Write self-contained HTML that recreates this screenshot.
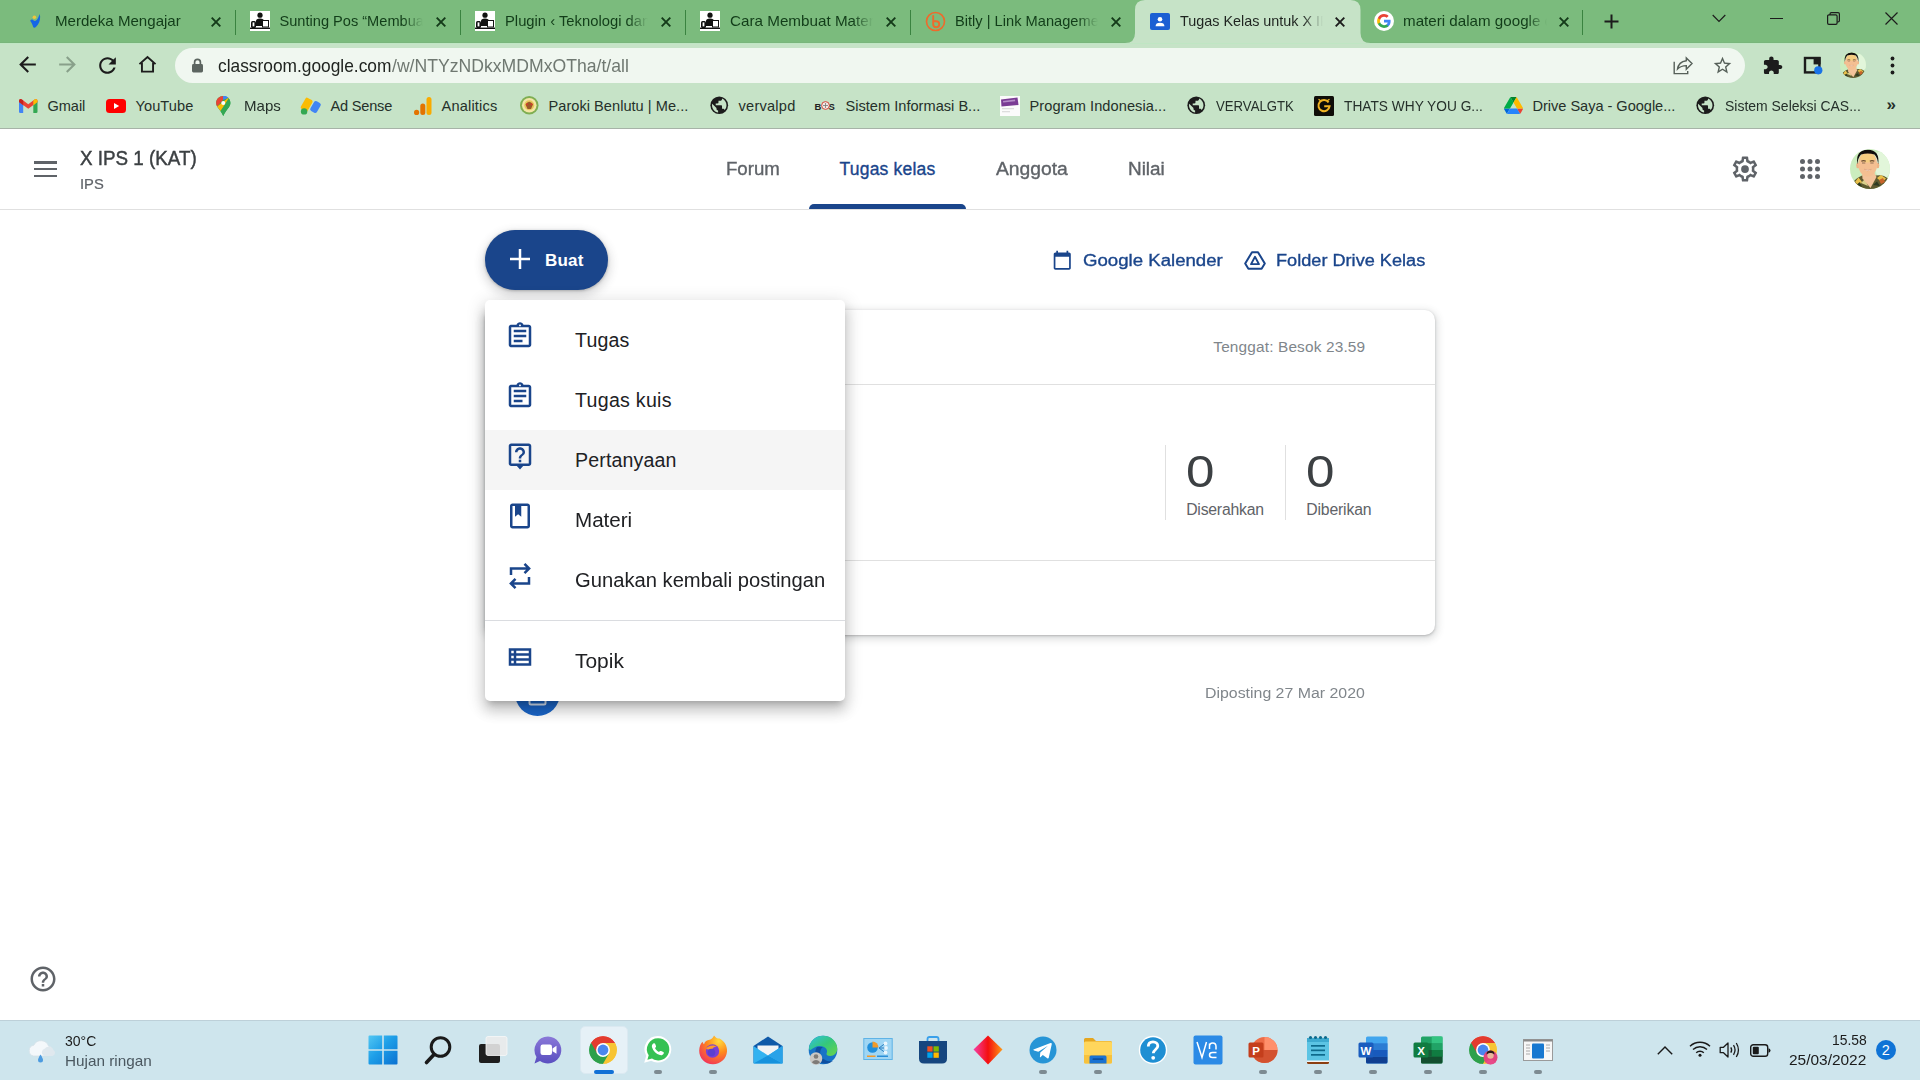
<!DOCTYPE html>
<html lang="id"><head><meta charset="utf-8"><title>Tugas Kelas untuk X IPS 1 (KAT)</title>
<style>
html,body{margin:0;padding:0;}
body{width:1920px;height:1080px;overflow:hidden;position:relative;background:#fff;font-family:"Liberation Sans", sans-serif;}
div,span,svg{box-sizing:border-box;}
svg{overflow:visible;}
</style></head><body>
<!-- browser chrome -->
<div style="position:absolute;left:0px;top:0px;width:1920px;height:43px;background:#7bbb7d;"></div>
<div style="position:absolute;left:0px;top:43px;width:1920px;height:85px;background:#c6e3c7;"></div>
<div style="position:absolute;left:0px;top:128px;width:1920px;height:1px;background:#a7b3a8;"></div>
<div style="position:absolute;left:0px;top:42px;width:1920px;height:1px;background:#79b57b;"></div>
<div style="position:absolute;left:0px;top:43px;width:1920px;height:1px;background:#bfe6c3;"></div>
<svg style="position:absolute;left:1125px;top:0px;" width="246" height="43" viewBox="0 0 246 43"><path d="M0 43 Q10 43 10 33 V10 Q10 0 20 0 H225.500 Q235.500 0 235.500 10 V33 Q235.500 43 245.500 43 Z" fill="#c6e3c7"/></svg>
<div style="position:absolute;left:235px;top:9.5px;width:1px;height:25px;background:#3a8340;"></div>
<div style="position:absolute;left:460px;top:9.5px;width:1px;height:25px;background:#3a8340;"></div>
<div style="position:absolute;left:685px;top:9.5px;width:1px;height:25px;background:#3a8340;"></div>
<div style="position:absolute;left:910px;top:9.5px;width:1px;height:25px;background:#3a8340;"></div>
<div style="position:absolute;left:1582px;top:9.5px;width:1px;height:25px;background:#3a8340;"></div>
<div style="position:absolute;left:55.3px;top:0;width:148px;height:42px;overflow:hidden;-webkit-mask-image:linear-gradient(to right,#000 123px,transparent 143px);mask-image:linear-gradient(to right,#000 123px,transparent 143px);"><span style="position:absolute;left:-0.50px;top:14.00px;font-size:14.6px;line-height:1;white-space:nowrap;color:#123d19;transform:scaleX(1.0338);transform-origin:0 0;">Merdeka Mengajar</span></div>
<div style="position:absolute;left:280px;top:0;width:148px;height:42px;overflow:hidden;-webkit-mask-image:linear-gradient(to right,#000 123px,transparent 143px);mask-image:linear-gradient(to right,#000 123px,transparent 143px);"><span style="position:absolute;left:-0.50px;top:14.00px;font-size:14.6px;line-height:1;white-space:nowrap;color:#123d19;">Sunting Pos “Membuat Materi</span></div>
<div style="position:absolute;left:505.1px;top:0;width:148px;height:42px;overflow:hidden;-webkit-mask-image:linear-gradient(to right,#000 123px,transparent 143px);mask-image:linear-gradient(to right,#000 123px,transparent 143px);"><span style="position:absolute;left:-0.50px;top:14.00px;font-size:14.6px;line-height:1;white-space:nowrap;color:#123d19;transform:scaleX(1.0129);transform-origin:0 0;">Plugin ‹ Teknologi dan Pendidikan</span></div>
<div style="position:absolute;left:730.1px;top:0;width:148px;height:42px;overflow:hidden;-webkit-mask-image:linear-gradient(to right,#000 123px,transparent 143px);mask-image:linear-gradient(to right,#000 123px,transparent 143px);"><span style="position:absolute;left:-0.50px;top:14.00px;font-size:14.6px;line-height:1;white-space:nowrap;color:#123d19;transform:scaleX(1.0429);transform-origin:0 0;">Cara Membuat Materi di Google</span></div>
<div style="position:absolute;left:955.1px;top:0;width:148px;height:42px;overflow:hidden;-webkit-mask-image:linear-gradient(to right,#000 123px,transparent 143px);mask-image:linear-gradient(to right,#000 123px,transparent 143px);"><span style="position:absolute;left:-0.50px;top:14.00px;font-size:14.6px;line-height:1;white-space:nowrap;color:#123d19;transform:scaleX(1.0034);transform-origin:0 0;">Bitly | Link Management</span></div>
<div style="position:absolute;left:1180.1px;top:0;width:148px;height:42px;overflow:hidden;-webkit-mask-image:linear-gradient(to right,#000 123px,transparent 143px);mask-image:linear-gradient(to right,#000 123px,transparent 143px);"><span style="position:absolute;left:-0.50px;top:14.00px;font-size:14.6px;line-height:1;white-space:nowrap;color:#1f2420;transform:scaleX(0.9849);transform-origin:0 0;">Tugas Kelas untuk X IPS 1 (KAT)</span></div>
<div style="position:absolute;left:1403.9px;top:0;width:148px;height:42px;overflow:hidden;-webkit-mask-image:linear-gradient(to right,#000 123px,transparent 143px);mask-image:linear-gradient(to right,#000 123px,transparent 143px);"><span style="position:absolute;left:-0.50px;top:14.00px;font-size:14.6px;line-height:1;white-space:nowrap;color:#123d19;transform:scaleX(1.0391);transform-origin:0 0;">materi dalam google classroom</span></div>
<svg style="position:absolute;left:211px;top:16.5px;" width="10" height="10" viewBox="0 0 10 10"><path d="M0.700 0.700 L9.300 9.300 M9.300 0.700 L0.700 9.300" stroke="#143a19" stroke-width="1.900" fill="none"/></svg>
<svg style="position:absolute;left:436px;top:16.5px;" width="10" height="10" viewBox="0 0 10 10"><path d="M0.700 0.700 L9.300 9.300 M9.300 0.700 L0.700 9.300" stroke="#143a19" stroke-width="1.900" fill="none"/></svg>
<svg style="position:absolute;left:661px;top:16.5px;" width="10" height="10" viewBox="0 0 10 10"><path d="M0.700 0.700 L9.300 9.300 M9.300 0.700 L0.700 9.300" stroke="#143a19" stroke-width="1.900" fill="none"/></svg>
<svg style="position:absolute;left:886px;top:16.5px;" width="10" height="10" viewBox="0 0 10 10"><path d="M0.700 0.700 L9.300 9.300 M9.300 0.700 L0.700 9.300" stroke="#143a19" stroke-width="1.900" fill="none"/></svg>
<svg style="position:absolute;left:1111px;top:16.5px;" width="10" height="10" viewBox="0 0 10 10"><path d="M0.700 0.700 L9.300 9.300 M9.300 0.700 L0.700 9.300" stroke="#143a19" stroke-width="1.900" fill="none"/></svg>
<svg style="position:absolute;left:1335px;top:16.5px;" width="10" height="10" viewBox="0 0 10 10"><path d="M0.700 0.700 L9.300 9.300 M9.300 0.700 L0.700 9.300" stroke="#1c1c1c" stroke-width="1.900" fill="none"/></svg>
<svg style="position:absolute;left:1559px;top:16.5px;" width="10" height="10" viewBox="0 0 10 10"><path d="M0.700 0.700 L9.300 9.300 M9.300 0.700 L0.700 9.300" stroke="#143a19" stroke-width="1.900" fill="none"/></svg>
<svg style="position:absolute;left:28px;top:12px;" width="14" height="18" viewBox="0 0 14 18"><path d="M11.600 1.900 C12.800 5 12 9.500 9.800 12.800 C8.800 14.400 7.300 15.800 6.200 15.700 C5.300 15.600 5 14.400 4.600 13.200 C4 11.300 3 9.800 2.200 8.700 C2.800 7.600 4 7.300 5 8 C6 8.700 6.800 9.200 7.600 8.800 C9.600 7.600 10.800 4.500 11.600 1.900 Z" fill="#1467e6"/><circle cx="6.400" cy="5.200" r="1.800" fill="#f0c53c"/></svg>
<svg style="position:absolute;left:250px;top:11px;" width="20" height="20" viewBox="0 0 20 20"><rect width="20" height="20" fill="#fff"/><circle cx="10" cy="4.2" r="2.6" fill="#111"/><path d="M6 15 V10 Q6 7.4 10 7.4 Q14 7.4 14 10 V15 Z" fill="#111"/><rect x="1" y="10" width="5" height="7" rx="1.5" fill="#111"/><rect x="2.6" y="11.4" width="1.8" height="4" fill="#fff"/><rect x="12.5" y="9.5" width="6" height="6.5" fill="#fff" stroke="#111" stroke-width="1"/><rect x="0" y="16.6" width="20" height="1.4" fill="#111"/></svg>
<svg style="position:absolute;left:475px;top:11px;" width="20" height="20" viewBox="0 0 20 20"><rect width="20" height="20" fill="#fff"/><circle cx="10" cy="4.2" r="2.6" fill="#111"/><path d="M6 15 V10 Q6 7.4 10 7.4 Q14 7.4 14 10 V15 Z" fill="#111"/><rect x="1" y="10" width="5" height="7" rx="1.5" fill="#111"/><rect x="2.6" y="11.4" width="1.8" height="4" fill="#fff"/><rect x="12.5" y="9.5" width="6" height="6.5" fill="#fff" stroke="#111" stroke-width="1"/><rect x="0" y="16.6" width="20" height="1.4" fill="#111"/></svg>
<svg style="position:absolute;left:700px;top:11px;" width="20" height="20" viewBox="0 0 20 20"><rect width="20" height="20" fill="#fff"/><circle cx="10" cy="4.2" r="2.6" fill="#111"/><path d="M6 15 V10 Q6 7.4 10 7.4 Q14 7.4 14 10 V15 Z" fill="#111"/><rect x="1" y="10" width="5" height="7" rx="1.5" fill="#111"/><rect x="2.6" y="11.4" width="1.8" height="4" fill="#fff"/><rect x="12.5" y="9.5" width="6" height="6.5" fill="#fff" stroke="#111" stroke-width="1"/><rect x="0" y="16.6" width="20" height="1.4" fill="#111"/></svg>
<svg style="position:absolute;left:925px;top:11px;" width="21" height="21" viewBox="0 0 21 21"><circle cx="10.5" cy="10.5" r="9" fill="none" stroke="#ee6a2c" stroke-width="1.6"/><path d="M8.2 5 V13.2 A3 3 0 1 0 11.2 10.2 H9.4" fill="none" stroke="#ee6a2c" stroke-width="1.9" stroke-linecap="round"/></svg>
<svg style="position:absolute;left:1150px;top:12.5px;" width="20" height="17" viewBox="0 0 20 17"><rect width="20" height="17" rx="2" fill="#1b5fd3"/><circle cx="10" cy="6.3" r="2.3" fill="#fff"/><path d="M5.6 13.2 Q5.6 9.8 10 9.8 Q14.4 9.8 14.4 13.2 Z" fill="#fff"/></svg>
<svg style="position:absolute;left:1374px;top:11px;" width="20" height="20" viewBox="0 0 20 20"><circle cx="10" cy="10" r="10" fill="#fff"/><path d="M16.6 10.15c0-.5-.04-.98-.13-1.45H10v2.75h3.7c-.16.86-.65 1.6-1.38 2.08v1.73h2.23c1.3-1.2 2.05-2.97 2.05-5.1z" fill="#4285f4"/><path d="M10 16.9c1.86 0 3.42-.62 4.55-1.67l-2.23-1.73c-.61.41-1.4.66-2.32.66-1.79 0-3.3-1.21-3.85-2.83H3.86v1.79C4.99 15.36 7.32 16.9 10 16.9z" fill="#34a853"/><path d="M6.15 11.33c-.14-.41-.22-.86-.22-1.33s.08-.92.22-1.33V6.88H3.86C3.39 7.82 3.1 8.88 3.1 10s.29 2.18.76 3.12l2.29-1.79z" fill="#fbbc05"/><path d="M10 5.84c1.01 0 1.92.35 2.63 1.03l1.97-1.97C13.41 3.79 11.86 3.1 10 3.1 7.32 3.1 4.99 4.64 3.86 6.88l2.29 1.79C6.7 7.05 8.21 5.84 10 5.84z" fill="#ea4335"/></svg>
<svg style="position:absolute;left:1603.5px;top:13.5px;" width="15" height="15" viewBox="0 0 15 15"><path d="M7.5 0.5 V14.5 M0.5 7.5 H14.5" stroke="#1c1c1c" stroke-width="2" fill="none"/></svg>
<svg style="position:absolute;left:1712px;top:14px;" width="14" height="9" viewBox="0 0 14 9"><path d="M0.7 1 L7 7.3 L13.3 1" stroke="#1c1c1c" stroke-width="1.2" fill="none"/></svg>
<div style="position:absolute;left:1770px;top:17.5px;width:13px;height:1.2px;background:#1c1c1c;"></div>
<svg style="position:absolute;left:1827px;top:11.5px;" width="13" height="13" viewBox="0 0 13 13"><rect x="0.6" y="2.9" width="9.5" height="9.5" rx="1.3" fill="none" stroke="#1c1c1c" stroke-width="1.2"/><path d="M3 2.9 V2 Q3 0.6 4.4 0.6 H11 Q12.4 0.6 12.4 2 V8.6 Q12.4 10 11 10 H10.2" fill="none" stroke="#1c1c1c" stroke-width="1.2"/></svg>
<svg style="position:absolute;left:1884.5px;top:11.5px;" width="13" height="13" viewBox="0 0 13 13"><path d="M0.5 0.5 L12.5 12.5 M12.5 0.5 L0.5 12.5" stroke="#1c1c1c" stroke-width="1.2" fill="none"/></svg>
<div style="position:absolute;left:175px;top:48px;width:1570px;height:35px;background:#f0f7f0;border-radius:17.5px;"></div>
<svg style="position:absolute;left:14.5px;top:52px;" width="25" height="25" viewBox="0 0 24 24"><path d="M20 11H7.83l5.59-5.59L12 4l-8 8 8 8 1.41-1.41L7.83 13H20v-2z" fill="#1c1c1c"/></svg>
<svg style="position:absolute;left:54.5px;top:52px;" width="25" height="25" viewBox="0 0 24 24"><path d="M4 11h12.17l-5.59-5.59L12 4l8 8-8 8-1.41-1.41L16.170 13H4v-2z" fill="#88a08a"/></svg>
<svg style="position:absolute;left:94.5px;top:52.5px;" width="25" height="25" viewBox="0 0 24 24"><path d="M17.65 6.35C16.2 4.9 14.21 4 12 4c-4.42 0-7.99 3.58-7.99 8s3.570 8 7.990 8c3.73 0 6.84-2.55 7.73-6h-2.08c-.82 2.33-3.04 4-5.65 4-3.31 0-6-2.69-6-6s2.69-6 6-6c1.660 0 3.140.69 4.220 1.780L13 11h7V4l-2.350 2.350z" fill="#1c1c1c"/></svg>
<svg style="position:absolute;left:135.5px;top:53.4px;" width="23" height="23" viewBox="0 0 24 24"><path d="M3.6 11.6 L12 4.2 L20.400 11.6 M6.2 10.2 V19.4 H17.8 V10.2" fill="none" stroke="#1c1c1c" stroke-width="2" stroke-linejoin="miter"/></svg>
<svg style="position:absolute;left:191px;top:58px;" width="13" height="15" viewBox="0 0 13 15"><rect x="1" y="6" width="11" height="8.5" rx="1.4" fill="#5c6560"/><path d="M3.6 6.5 V4.300 A2.9 2.9 0 0 1 9.400 4.300 V6.5" fill="none" stroke="#5c6560" stroke-width="1.700"/></svg>
<span style="position:absolute;left:217.50px;top:56.80px;font-size:18.6px;line-height:1;white-space:nowrap;color:#202420;transform:scaleX(0.9321);transform-origin:0 0;">classroom.google.com</span>
<span style="position:absolute;left:391.50px;top:56.80px;font-size:18.6px;line-height:1;white-space:nowrap;color:#6f7871;transform:scaleX(0.9472);transform-origin:0 0;">/w/NTYzNDkxMDMxOTha/t/all</span>
<svg style="position:absolute;left:1670px;top:53px;" width="24" height="24" viewBox="0 0 24 24"><path d="M4.200 8.700 V20.600 H17.700 V18.100" fill="none" stroke="#566059" stroke-width="1.400"/><path d="M7.500 16.100 Q8.500 8.800 16.300 7.700 V4.900 L22 10.500 L16.300 16.200 V12.600 Q11 12.600 7.500 16.100 Z" fill="none" stroke="#566059" stroke-width="1.400" stroke-linejoin="miter"/></svg>
<svg style="position:absolute;left:1711.8px;top:55.2px;" width="21" height="21" viewBox="0 0 24 24"><path d="M22 9.240l-7.190-.620L12 2 9.190 8.630 2 9.240l5.460 4.730L5.820 21 12 17.270 18.180 21l-1.630-7.030L22 9.240zM12 15.400l-3.760 2.270 1-4.280-3.320-2.880 4.380-.380L12 6.100l1.710 4.040 4.380.380-3.320 2.880 1 4.280L12 15.400z" fill="#566059"/></svg>
<svg style="position:absolute;left:1759.5px;top:52.5px;" width="25" height="25" viewBox="0 0 24 24"><path d="M20.5 11H19V7c0-1.100-.9-2-2-2h-4V3.500C13 2.120 11.880 1 10.500 1S8 2.120 8 3.500V5H4c-1.100 0-1.990.9-1.990 2v3.800H3.500c1.490 0 2.700 1.210 2.700 2.700s-1.210 2.700-2.700 2.700H2V20c0 1.100.9 2 2 2h3.800v-1.500c0-1.490 1.210-2.700 2.700-2.700 1.490 0 2.700 1.210 2.700 2.700V22H17c1.100 0 2-.9 2-2v-4h1.500c1.380 0 2.500-1.120 2.500-2.500S21.880 11 20.500 11z" fill="#1c1c1c" transform="translate(2.100 2.600) scale(0.84 0.80)"/></svg>
<svg style="position:absolute;left:1803px;top:55.5px;" width="21" height="20" viewBox="0 0 21 20"><rect x="2" y="2" width="14.400" height="14.400" fill="none" stroke="#1c1c1c" stroke-width="2.400"/><rect x="10.600" y="1" width="7" height="7.400" fill="#1c1c1c"/><circle cx="15.300" cy="14.300" r="4.100" fill="#1a73e8"/></svg>
<svg style="position:absolute;left:1840px;top:52px;" width="26" height="26" viewBox="0 0 40 40"><clipPath id="avc1"><circle cx="20" cy="20" r="20"/></clipPath><g clip-path="url(#avc1)"><rect width="40" height="40" fill="#cbedbe"/><ellipse cx="33" cy="15" rx="9" ry="14" fill="#e2f6da"/><path d="M2 42 L4.500 31.500 Q9 27 14 26 L26 26.500 Q33 25 38 29.500 L40 42 Z" fill="#5e5a30"/><path d="M5 33 L8.500 28.500 L12 33 L9 37 Z M27 29 L31 26 L36 29.500 L32 33.500 Z" fill="#e9c04a"/><path d="M29 31 L33 29 L35 33 L31 35 Z" fill="#c8642a"/><path d="M6 36 L10 33 L12 38 Z M23 36 L27 32.500 L30 37 Z" fill="#2e3a22"/><path d="M11 34 L15 30 L18 37 Z" fill="#d9cf8a"/><path d="M12 24 L24.500 24 L26.500 28 L20.500 39 L12.500 29.500 Z" fill="#f3c39a"/><ellipse cx="7.800" cy="16.500" rx="1.600" ry="2.800" fill="#eeb487"/><ellipse cx="27.700" cy="16.500" rx="1.600" ry="2.800" fill="#eeb487"/><ellipse cx="17.700" cy="15.300" rx="9.600" ry="12.300" fill="#f4bf92"/><ellipse cx="17.700" cy="9" rx="7.500" ry="4.500" fill="#f6d27a" opacity=".75"/><path d="M7.300 15.500 Q5.300 1 17.700 0.700 Q30.200 1 28.200 15.500 Q27.500 8.500 24.500 5.500 Q17.700 3.300 11 5.500 Q8 8.500 7.300 15.500 Z" fill="#100e0b"/><path d="M11.300 12.300 Q13.500 11 15.800 12.300 M19.800 12.300 Q22 11 24.300 12.300" stroke="#6a4a32" stroke-width="1.100" fill="none"/><path d="M12 14 H15.300 M20.300 14 H23.600" stroke="#7a5a44" stroke-width=".8"/><path d="M14.300 20.300 Q17.700 23.300 21.300 20.300 Q17.700 21.300 14.300 20.300 Z" fill="#fff6ee" stroke="#d99a78" stroke-width=".5"/></g></svg>
<svg style="position:absolute;left:1889.5px;top:56px;" width="5" height="19" viewBox="0 0 5 19"><circle cx="2.500" cy="2.500" r="1.900" fill="#1c1c1c"/><circle cx="2.500" cy="9.500" r="1.900" fill="#1c1c1c"/><circle cx="2.500" cy="16.500" r="1.900" fill="#1c1c1c"/></svg>
<span style="position:absolute;left:47.50px;top:98.70px;font-size:14.6px;line-height:1;white-space:nowrap;color:#25302a;letter-spacing:-0.077px;">Gmail</span>
<span style="position:absolute;left:135.50px;top:98.70px;font-size:14.6px;line-height:1;white-space:nowrap;color:#25302a;letter-spacing:0.073px;">YouTube</span>
<span style="position:absolute;left:243.50px;top:98.70px;font-size:14.6px;line-height:1;white-space:nowrap;color:#25302a;transform:scaleX(1.0312);transform-origin:0 0;">Maps</span>
<span style="position:absolute;left:330.50px;top:98.70px;font-size:14.6px;line-height:1;white-space:nowrap;color:#25302a;letter-spacing:-0.214px;">Ad Sense</span>
<span style="position:absolute;left:441.50px;top:98.70px;font-size:14.6px;line-height:1;white-space:nowrap;color:#25302a;letter-spacing:0.182px;">Analitics</span>
<span style="position:absolute;left:548.50px;top:98.70px;font-size:14.6px;line-height:1;white-space:nowrap;color:#25302a;letter-spacing:0.025px;">Paroki Benlutu | Me...</span>
<span style="position:absolute;left:738.50px;top:98.70px;font-size:14.6px;line-height:1;white-space:nowrap;color:#25302a;letter-spacing:0.233px;">vervalpd</span>
<span style="position:absolute;left:845.50px;top:98.70px;font-size:14.6px;line-height:1;white-space:nowrap;color:#25302a;letter-spacing:0.009px;">Sistem Informasi B...</span>
<span style="position:absolute;left:1029.50px;top:98.70px;font-size:14.6px;line-height:1;white-space:nowrap;color:#25302a;letter-spacing:0.069px;">Program Indonesia...</span>
<span style="position:absolute;left:1215.50px;top:98.70px;font-size:14.6px;line-height:1;white-space:nowrap;color:#25302a;transform:scaleX(0.9020);transform-origin:0 0;">VERVALGTK</span>
<span style="position:absolute;left:1343.50px;top:98.70px;font-size:14.6px;line-height:1;white-space:nowrap;color:#25302a;transform:scaleX(0.9405);transform-origin:0 0;">THATS WHY YOU G...</span>
<span style="position:absolute;left:1532.50px;top:98.70px;font-size:14.6px;line-height:1;white-space:nowrap;color:#25302a;letter-spacing:-0.037px;">Drive Saya - Google...</span>
<span style="position:absolute;left:1724.50px;top:98.70px;font-size:14.6px;line-height:1;white-space:nowrap;color:#25302a;transform:scaleX(0.9568);transform-origin:0 0;">Sistem Seleksi CAS...</span>
<span style="position:absolute;left:1886.50px;top:96.00px;font-size:17px;line-height:1;white-space:nowrap;color:#25302a;font-weight:700;">»</span>
<svg style="position:absolute;left:19px;top:98.5px;" width="18.5" height="14" viewBox="0 0 18.5 14"><path d="M0 2 L0 12.700 Q0 14 1.300 14 H4.200 V6.200 Z" fill="#4285f4"/><path d="M18.500 2 V12.700 Q18.500 14 17.200 14 H14.300 V6.200 Z" fill="#34a853"/><path d="M0 1.700 Q0 0 1.700 0 Q2.300 0 2.900 .45 L9.250 5.200 L15.600 .45 Q16.200 0 16.800 0 Q18.500 0 18.500 1.700 V2.900 L9.250 9.800 L0 2.900 Z" fill="#ea4335"/><path d="M0 1.700 Q0 0 1.700 0 Q2.300 0 2.900 .45 L4.200 1.400 V6.200 L0 3 Z" fill="#c5221f"/><path d="M18.500 1.700 Q18.500 0 16.800 0 Q16.200 0 15.600 .45 L14.300 1.400 V6.200 L18.500 3 Z" fill="#fbbc04"/></svg>
<svg style="position:absolute;left:106px;top:98.5px;" width="20" height="14" viewBox="0 0 20 14"><rect width="20" height="14" rx="3.500" fill="#f00"/><path d="M8 4 L13.200 7 L8 10 Z" fill="#fff"/></svg>
<svg style="position:absolute;left:216.4px;top:95.8px;" width="14.5" height="20" viewBox="0 0 15 21"><path d="M7.500 0 C3.300 0 0 3.300 0 7.400 C0 11.500 4.300 14.300 7.500 21 C10.700 14.300 15 11.500 15 7.400 C15 3.300 11.700 0 7.500 0 Z" fill="#34a853"/><path d="M7.500 0 C3.300 0 0 3.300 0 7.400 C0 8.700 .4 9.900 1.100 11 L7.500 4 Z" fill="#ea4335"/><path d="M7.500 0 L7.500 4 L12.800 1.900 C11.500 .7 9.600 0 7.500 0 Z" fill="#4285f4" /><path d="M12.800 1.900 C11.400 .7 9.500 0 7.500 0 L7.500 4 Z" fill="#4285f4"/><path d="M1.100 11 C2 12.500 3.400 13.900 4.700 15.700 L13.600 4.600 C13.500 3.600 13 2.600 12.800 1.900 Z" fill="#fbbc04"/><path d="M13.200 2.400 L4.700 15.700 C5.700 17.100 6.700 18.800 7.500 21 C10.700 14.300 15 11.500 15 7.400 C15 5.500 14.300 3.700 13.200 2.400 Z" fill="#34a853"/><path d="M9.800 .4 L2 9.800 C1 8.300 .2 6.400 .7 4.600 C1.500 1.800 4.500 -.4 7.500 0 Z" fill="#ea4335" opacity="0"/><circle cx="7.500" cy="7.300" r="2.100" fill="#fff"/></svg>
<svg style="position:absolute;left:300px;top:96.5px;" width="22" height="18" viewBox="0 0 22 18"><path d="M7 2.400 L10.900 4.600 L6.300 12.600 L2.400 10.400 Z" fill="#fbbc04" stroke="#fbbc04" stroke-width="3.400" stroke-linejoin="round"/><path d="M15.800 6 L18.800 7.700 L15.200 14 L12.200 12.300 Z" fill="#4285f4" stroke="#4285f4" stroke-width="4" stroke-linejoin="round"/><circle cx="4.100" cy="14.400" r="3.200" fill="#34a853"/></svg>
<svg style="position:absolute;left:414px;top:96.5px;" width="18" height="18" viewBox="0 0 18 18"><rect x="12.500" y="0" width="5" height="18" rx="2.500" fill="#f9ab00"/><rect x="6.300" y="6.500" width="5" height="11.500" rx="2.500" fill="#e37400"/><circle cx="2.600" cy="15.400" r="2.600" fill="#e37400"/></svg>
<svg style="position:absolute;left:520px;top:96px;" width="18.5" height="18.5" viewBox="0 0 18.5 18.5"><circle cx="9.250" cy="9.250" r="9.250" fill="#7fae52"/><circle cx="9.250" cy="9.250" r="7.300" fill="#f4e6a6"/><circle cx="9.250" cy="9.250" r="5" fill="#e8c65a"/><path d="M5.500 8.500 Q9.250 3 13 8.500 L11 13 H7.500 Z" fill="#9b5a2a"/><circle cx="7" cy="8.300" r="1.100" fill="#d43b2a"/><circle cx="11.500" cy="8.300" r="1.100" fill="#d43b2a"/></svg>
<svg style="position:absolute;left:710px;top:96px;" width="18.5" height="18.5" viewBox="0 0 24 24"><circle cx="12" cy="12" r="11.500" fill="#1c1c1c"/><path d="M10.500 21.400 C6 20.700 2.600 16.800 2.600 12 C2.600 11.300 2.700 10.600 2.800 9.900 L8.400 15.500 V16.700 C8.400 17.900 9.400 18.900 10.500 18.900 Z M18.900 18.300 C18.600 17.400 17.800 16.700 16.800 16.700 H15.600 V13.200 C15.600 12.600 15.100 12 14.400 12 H7.400 V9.700 H9.800 C10.400 9.700 11 9.100 11 8.500 V6.100 H13.300 C14.600 6.100 15.600 5.100 15.600 3.800 V3.300 C19 4.700 21.400 8.100 21.400 12 C21.400 14.400 20.500 16.700 18.900 18.300 Z" fill="#c6e3c7"/></svg>
<svg style="position:absolute;left:1187px;top:96px;" width="18.5" height="18.5" viewBox="0 0 24 24"><circle cx="12" cy="12" r="11.500" fill="#1c1c1c"/><path d="M10.500 21.400 C6 20.700 2.600 16.800 2.600 12 C2.600 11.300 2.700 10.600 2.800 9.900 L8.400 15.500 V16.700 C8.400 17.900 9.400 18.900 10.500 18.900 Z M18.900 18.300 C18.600 17.400 17.800 16.700 16.800 16.700 H15.600 V13.200 C15.600 12.600 15.100 12 14.400 12 H7.400 V9.700 H9.800 C10.400 9.700 11 9.100 11 8.500 V6.100 H13.300 C14.600 6.100 15.600 5.100 15.600 3.800 V3.300 C19 4.700 21.400 8.100 21.400 12 C21.400 14.400 20.500 16.700 18.900 18.300 Z" fill="#c6e3c7"/></svg>
<svg style="position:absolute;left:1696px;top:96px;" width="18.5" height="18.5" viewBox="0 0 24 24"><circle cx="12" cy="12" r="11.500" fill="#1c1c1c"/><path d="M10.500 21.400 C6 20.700 2.600 16.800 2.600 12 C2.600 11.300 2.700 10.600 2.800 9.900 L8.400 15.500 V16.700 C8.400 17.900 9.400 18.900 10.500 18.900 Z M18.900 18.300 C18.600 17.400 17.800 16.700 16.800 16.700 H15.600 V13.200 C15.600 12.600 15.100 12 14.400 12 H7.400 V9.700 H9.800 C10.400 9.700 11 9.100 11 8.500 V6.100 H13.300 C14.600 6.100 15.600 5.100 15.600 3.800 V3.300 C19 4.700 21.400 8.100 21.400 12 C21.400 14.400 20.500 16.700 18.900 18.300 Z" fill="#c6e3c7"/></svg>
<span style="position:absolute;left:814.50px;top:102.00px;font-size:9.5px;line-height:1;white-space:nowrap;color:#222;font-weight:700;">B</span>
<span style="position:absolute;left:828.50px;top:102.00px;font-size:9.5px;line-height:1;white-space:nowrap;color:#222;font-weight:700;">S</span>
<svg style="position:absolute;left:820.5px;top:100.5px;" width="9" height="9" viewBox="0 0 9 9"><circle cx="4.500" cy="4.500" r="3.900" fill="#f3e9e6" stroke="#d0473b" stroke-width="1"/><path d="M2 4.500 H7 M4.500 2 V7" stroke="#777" stroke-width=".8"/></svg>
<svg style="position:absolute;left:1000px;top:95.5px;" width="20" height="20" viewBox="0 0 20 20"><rect width="20" height="20" fill="#fbfbfb"/><path d="M1 3.500 L17.500 1.500 L18.500 9 L1.500 10.500 Z" fill="#7a3b94"/><path d="M3 5 L15 3.600 L15.200 5.200 L3.200 6.600 Z" fill="#b58cc8"/><rect x="2" y="12" width="12" height="1.300" fill="#ddd"/><rect x="2" y="15" width="8" height="1.300" fill="#ddd"/></svg>
<svg style="position:absolute;left:1314px;top:95.5px;" width="20" height="20" viewBox="0 0 20 20"><rect width="20" height="20" rx="1.500" fill="#0f0d08"/><path d="M14.600 6.300 A5.600 5.600 0 1 0 15.600 10.200 H10.200" fill="none" stroke="#f0b323" stroke-width="2"/><path d="M4.500 3.200 L7 5 M15.500 3.200 L13.200 4.800" stroke="#f0b323" stroke-width="1.300"/></svg>
<svg style="position:absolute;left:1504px;top:97px;" width="19" height="17" viewBox="0 0 87.3 78"><path d="m6.600 66.850 3.850 6.650c.8 1.400 1.950 2.500 3.300 3.300l13.750-23.800h-27.500c0 1.550.4 3.100 1.200 4.500z" fill="#0066da"/><path d="m43.650 25-13.750-23.800c-1.350.8-2.500 1.900-3.300 3.300l-25.400 44a9.060 9.060 0 0 0 -1.200 4.500h27.500z" fill="#00ac47"/><path d="m73.550 76.800c1.350-.8 2.500-1.900 3.300-3.300l1.600-2.750 7.650-13.250c.8-1.400 1.200-2.950 1.200-4.500h-27.502l5.852 11.500z" fill="#ea4335"/><path d="m43.650 25 13.750-23.800c-1.350-.8-2.900-1.200-4.500-1.200h-18.500c-1.600 0-3.150.45-4.500 1.200z" fill="#00832d"/><path d="m59.800 53h-32.300l-13.750 23.800c1.350.8 2.900 1.200 4.500 1.200h50.800c1.600 0 3.150-.45 4.500-1.200z" fill="#2684fc"/><path d="m73.400 26.500-12.700-22c-.8-1.400-1.950-2.500-3.300-3.300l-13.750 23.800 16.150 28h27.450c0-1.550-.4-3.100-1.200-4.500z" fill="#ffba00"/></svg>
<!-- classroom page -->
<div style="position:absolute;left:0px;top:209px;width:1920px;height:1px;background:#e0e0e0;"></div>
<div style="position:absolute;left:34px;top:161px;width:22.5px;height:2.5px;background:#5f6368;"></div>
<div style="position:absolute;left:34px;top:167.75px;width:22.5px;height:2.5px;background:#5f6368;"></div>
<div style="position:absolute;left:34px;top:174.5px;width:22.5px;height:2.5px;background:#5f6368;"></div>
<span style="position:absolute;left:79.50px;top:146.70px;font-size:21px;line-height:1;white-space:nowrap;color:#3c4043;transform:scaleX(0.8963);transform-origin:0 0;-webkit-text-stroke:0.45px currentColor;">X IPS 1 (KAT)</span>
<span style="position:absolute;left:79.50px;top:176.00px;font-size:15.4px;line-height:1;white-space:nowrap;color:#5f6368;transform:scaleX(0.9592);transform-origin:0 0;-webkit-text-stroke:0.2px currentColor;">IPS</span>
<span style="position:absolute;left:725.50px;top:161.00px;font-size:17.5px;line-height:1;white-space:nowrap;color:#5f6368;transform:scaleX(1.0640);transform-origin:0 0;-webkit-text-stroke:0.35px currentColor;">Forum</span>
<span style="position:absolute;left:839.50px;top:161.00px;font-size:17.5px;line-height:1;white-space:nowrap;color:#1a458b;letter-spacing:0.208px;-webkit-text-stroke:0.35px currentColor;">Tugas kelas</span>
<span style="position:absolute;left:995.50px;top:161.00px;font-size:17.5px;line-height:1;white-space:nowrap;color:#5f6368;transform:scaleX(1.1012);transform-origin:0 0;-webkit-text-stroke:0.35px currentColor;">Anggota</span>
<span style="position:absolute;left:1127.50px;top:161.00px;font-size:17.5px;line-height:1;white-space:nowrap;color:#5f6368;transform:scaleX(1.0809);transform-origin:0 0;-webkit-text-stroke:0.35px currentColor;">Nilai</span>
<div style="position:absolute;left:809px;top:204px;width:157px;height:5px;background:#1a458b;border-radius:5px 5px 0 0;"></div>
<svg style="position:absolute;left:1730px;top:154px;" width="30" height="30" viewBox="0 0 24 24"><path d="M19.430 12.980c.04-.32.07-.64.07-.98 0-.34-.03-.66-.07-.98l2.110-1.650c.19-.15.240-.42.120-.64l-2-3.460c-.09-.16-.26-.25-.44-.25-.06 0-.12.01-.17.030l-2.490 1c-.52-.4-1.080-.73-1.690-.98l-.38-2.650C14.460 2.180 14.250 2 14 2h-4c-.25 0-.46.180-.49.420l-.38 2.650c-.61.250-1.170.590-1.690.980l-2.490-1c-.06-.02-.12-.03-.18-.03-.17 0-.34.090-.43.250l-2 3.460c-.13.220-.07.490.12.640l2.110 1.650c-.04.320-.07.650-.07.980 0 .33.030.66.070.98l-2.110 1.650c-.19.150-.24.420-.12.640l2 3.460c.09.160.26.250.44.250.06 0 .12-.01.17-.03l2.490-1c.52.4 1.080.73 1.690.98l.38 2.650c.03.240.24.420.49.420h4c.25 0 .46-.18.490-.42l.38-2.650c.61-.25 1.170-.59 1.690-.98l2.490 1c.06.020.12.030.18.030.17 0 .34-.09.43-.25l2-3.460c.12-.22.070-.49-.12-.64l-2.110-1.650zm-1.980-1.710c.04.310.05.520.05.730 0 .21-.02.430-.05.730l-.14 1.130.89.700 1.080.84-.7 1.210-1.270-.51-1.040-.42-.9.680c-.43.320-.84.560-1.250.730l-1.060.43-.16 1.130-.2 1.350h-1.400l-.19-1.350-.16-1.130-1.060-.43c-.43-.18-.83-.41-1.230-.71l-.91-.7-1.060.43-1.270.51-.7-1.210 1.080-.84.890-.7-.14-1.130c-.03-.31-.05-.54-.05-.74s.02-.43.050-.73l.14-1.130-.89-.7-1.080-.84.700-1.210 1.270.51 1.040.42.900-.68c.43-.32.840-.56 1.250-.73l1.060-.43.160-1.130.2-1.350h1.390l.19 1.350.16 1.130 1.060.43c.43.180.83.410 1.230.71l.91.700 1.060-.43 1.270-.51.700 1.210-1.070.85-.89.700.14 1.130z" fill="#5f6368"/><circle cx="12" cy="12" r="3.100" fill="#5f6368"/></svg>
<svg style="position:absolute;left:1800px;top:159px;" width="20" height="20" viewBox="0 0 20 20"><circle cx="2.5" cy="2.5" r="2.500" fill="#5f6368"/><circle cx="2.5" cy="10" r="2.500" fill="#5f6368"/><circle cx="2.5" cy="17.5" r="2.500" fill="#5f6368"/><circle cx="10" cy="2.5" r="2.500" fill="#5f6368"/><circle cx="10" cy="10" r="2.500" fill="#5f6368"/><circle cx="10" cy="17.5" r="2.500" fill="#5f6368"/><circle cx="17.5" cy="2.5" r="2.500" fill="#5f6368"/><circle cx="17.5" cy="10" r="2.500" fill="#5f6368"/><circle cx="17.5" cy="17.5" r="2.500" fill="#5f6368"/></svg>
<svg style="position:absolute;left:1850px;top:149px;" width="40" height="40" viewBox="0 0 40 40"><clipPath id="avc2"><circle cx="20" cy="20" r="20"/></clipPath><g clip-path="url(#avc2)"><rect width="40" height="40" fill="#cbedbe"/><ellipse cx="33" cy="15" rx="9" ry="14" fill="#e2f6da"/><path d="M2 42 L4.500 31.500 Q9 27 14 26 L26 26.500 Q33 25 38 29.500 L40 42 Z" fill="#5e5a30"/><path d="M5 33 L8.500 28.500 L12 33 L9 37 Z M27 29 L31 26 L36 29.500 L32 33.500 Z" fill="#e9c04a"/><path d="M29 31 L33 29 L35 33 L31 35 Z" fill="#c8642a"/><path d="M6 36 L10 33 L12 38 Z M23 36 L27 32.500 L30 37 Z" fill="#2e3a22"/><path d="M11 34 L15 30 L18 37 Z" fill="#d9cf8a"/><path d="M12 24 L24.500 24 L26.500 28 L20.500 39 L12.500 29.500 Z" fill="#f3c39a"/><ellipse cx="7.800" cy="16.500" rx="1.600" ry="2.800" fill="#eeb487"/><ellipse cx="27.700" cy="16.500" rx="1.600" ry="2.800" fill="#eeb487"/><ellipse cx="17.700" cy="15.300" rx="9.600" ry="12.300" fill="#f4bf92"/><ellipse cx="17.700" cy="9" rx="7.500" ry="4.500" fill="#f6d27a" opacity=".75"/><path d="M7.300 15.500 Q5.300 1 17.700 0.700 Q30.200 1 28.200 15.500 Q27.500 8.500 24.500 5.500 Q17.700 3.300 11 5.500 Q8 8.500 7.300 15.500 Z" fill="#100e0b"/><path d="M11.300 12.300 Q13.500 11 15.800 12.300 M19.800 12.300 Q22 11 24.300 12.300" stroke="#6a4a32" stroke-width="1.100" fill="none"/><path d="M12 14 H15.300 M20.300 14 H23.600" stroke="#7a5a44" stroke-width=".8"/><path d="M14.300 20.300 Q17.700 23.300 21.300 20.300 Q17.700 21.300 14.300 20.300 Z" fill="#fff6ee" stroke="#d99a78" stroke-width=".5"/></g></svg>
<div style="position:absolute;left:485px;top:230px;width:123px;height:60px;background:#1a458b;border-radius:30px;box-shadow:0 1px 3px rgba(60,64,67,.35),0 4px 9px 3px rgba(60,64,67,.16);"></div>
<svg style="position:absolute;left:510px;top:249px;" width="20" height="20" viewBox="0 0 20 20"><path d="M10 0 V20 M0 10 H20" stroke="#fff" stroke-width="2.500"/></svg>
<span style="position:absolute;left:545.10px;top:251.60px;font-size:17px;line-height:1;white-space:nowrap;color:#fff;font-weight:700;letter-spacing:0.173px;">Buat</span>
<svg style="position:absolute;left:1052.3px;top:250px;" width="20.5" height="20.5" viewBox="0 0 24 24"><path d="M20 3h-1V1h-2v2H7V1H5v2H4c-1.100 0-2 .9-2 2v16c0 1.100.9 2 2 2h16c1.100 0 2-.9 2-2V5c0-1.100-.9-2-2-2zm0 18H4V8h16v13z" fill="#1a458b"/></svg>
<span style="position:absolute;left:1083.20px;top:251.60px;font-size:17.3px;line-height:1;white-space:nowrap;color:#1a458b;transform:scaleX(1.0778);transform-origin:0 0;-webkit-text-stroke:0.35px currentColor;">Google Kalender</span>
<svg style="position:absolute;left:1243.5px;top:251px;" width="22" height="19" viewBox="0 0 22 19"><path d="M8 1.200 H14 L20.800 12.600 L17.600 17.800 H4.400 L1.200 12.600 Z" fill="none" stroke="#1a458b" stroke-width="2" stroke-linejoin="round"/><path d="M11 5.800 L15 13.200 H7 Z" fill="none" stroke="#1a458b" stroke-width="1.800" stroke-linejoin="round"/></svg>
<span style="position:absolute;left:1275.50px;top:251.60px;font-size:17.3px;line-height:1;white-space:nowrap;color:#1a458b;transform:scaleX(1.0497);transform-origin:0 0;-webkit-text-stroke:0.35px currentColor;">Folder Drive Kelas</span>
<div style="position:absolute;left:485px;top:310px;width:950px;height:325px;background:#fff;border-radius:10px;box-shadow:0 1px 2.500px rgba(60,64,67,.3),0 2.500px 7.500px 2.500px rgba(60,64,67,.15);"></div>
<div style="position:absolute;left:485px;top:384px;width:950px;height:1px;background:#e0e0e0;"></div>
<div style="position:absolute;left:485px;top:560px;width:950px;height:1px;background:#e0e0e0;"></div>
<div style="position:absolute;left:1165px;top:445px;width:1px;height:75px;background:#e0e0e0;"></div>
<div style="position:absolute;left:1285px;top:445px;width:1px;height:75px;background:#e0e0e0;"></div>
<span style="position:absolute;left:1213.30px;top:339.00px;font-size:15.4px;line-height:1;white-space:nowrap;color:#80868b;letter-spacing:0.153px;">Tenggat: Besok 23.59</span>
<span style="position:absolute;left:1186.30px;top:450.00px;font-size:44px;line-height:1;white-space:nowrap;color:#3c4043;transform:scaleX(1.1635);transform-origin:0 0;">0</span>
<span style="position:absolute;left:1306.30px;top:450.00px;font-size:44px;line-height:1;white-space:nowrap;color:#3c4043;transform:scaleX(1.1635);transform-origin:0 0;">0</span>
<span style="position:absolute;left:1186.20px;top:502.30px;font-size:15.8px;line-height:1;white-space:nowrap;color:#5f6368;letter-spacing:-0.234px;">Diserahkan</span>
<span style="position:absolute;left:1306.20px;top:502.30px;font-size:15.8px;line-height:1;white-space:nowrap;color:#5f6368;letter-spacing:-0.167px;">Diberikan</span>
<span style="position:absolute;left:1205.30px;top:685.00px;font-size:15.4px;line-height:1;white-space:nowrap;color:#80868b;transform:scaleX(1.0319);transform-origin:0 0;">Diposting 27 Mar 2020</span>
<svg style="position:absolute;left:515px;top:670.5px;" width="45" height="45" viewBox="0 0 45 45"><circle cx="22.500" cy="22.500" r="22.500" fill="#1b66c9"/><path d="M14.500 22 V32 Q14.500 33.500 16 33.500 H29 Q30.500 33.500 30.500 32 V22" fill="none" stroke="#d8e4f6" stroke-width="2"/></svg>
<div style="position:absolute;left:485px;top:300px;width:360px;height:401px;background:#fff;border-radius:5px;box-shadow:0 6px 6px -4px rgba(0,0,0,.2),0 10px 12.500px 1px rgba(0,0,0,.14),0 4px 17.500px 2.500px rgba(0,0,0,.12);"></div>
<div style="position:absolute;left:485px;top:430px;width:360px;height:60px;background:#f5f5f5;"></div>
<div style="position:absolute;left:485px;top:620px;width:360px;height:1px;background:#dadce0;"></div>
<span style="position:absolute;left:575.10px;top:330.50px;font-size:19.6px;line-height:1;white-space:nowrap;color:#202124;letter-spacing:0.116px;">Tugas</span>
<span style="position:absolute;left:575.10px;top:390.50px;font-size:19.6px;line-height:1;white-space:nowrap;color:#202124;letter-spacing:0.263px;">Tugas kuis</span>
<span style="position:absolute;left:575.10px;top:450.50px;font-size:19.6px;line-height:1;white-space:nowrap;color:#202124;letter-spacing:0.131px;">Pertanyaan</span>
<span style="position:absolute;left:575.10px;top:510.50px;font-size:19.6px;line-height:1;white-space:nowrap;color:#202124;transform:scaleX(1.0504);transform-origin:0 0;">Materi</span>
<span style="position:absolute;left:575.10px;top:570.50px;font-size:19.6px;line-height:1;white-space:nowrap;color:#202124;transform:scaleX(1.0304);transform-origin:0 0;">Gunakan kembali postingan</span>
<span style="position:absolute;left:575.10px;top:651.50px;font-size:19.6px;line-height:1;white-space:nowrap;color:#202124;transform:scaleX(1.0689);transform-origin:0 0;">Topik</span>
<svg style="position:absolute;left:504.9px;top:320.5px;" width="30" height="30" viewBox="0 0 24 24"><path d="M7 15h7v2H7zm0-4h10v2H7zm0-4h10v2H7zm12-4h-4.180C14.400 1.840 13.300 1 12 1c-1.300 0-2.400.84-2.820 2H5c-.14 0-.27.010-.4.040-.39.080-.74.280-1.010.550-.18.180-.33.4-.43.640-.1.230-.16.490-.16.770v14c0 .27.060.54.160.78s.25.450.43.640c.27.270.62.470 1.010.550.130.020.260.030.4.030h14c1.100 0 2-.9 2-2V5c0-1.100-.9-2-2-2zm-7-.25c.41 0 .75.340.75.750s-.34.750-.75.750-.75-.34-.75-.75.340-.75.750-.75zM19 19H5V5h14v14z" fill="#1a458b"/></svg>
<svg style="position:absolute;left:504.9px;top:380.5px;" width="30" height="30" viewBox="0 0 24 24"><path d="M7 15h7v2H7zm0-4h10v2H7zm0-4h10v2H7zm12-4h-4.180C14.400 1.840 13.300 1 12 1c-1.300 0-2.400.84-2.820 2H5c-.14 0-.27.010-.4.040-.39.080-.74.280-1.010.550-.18.180-.33.4-.43.640-.1.230-.16.490-.16.770v14c0 .27.060.54.160.78s.25.450.43.640c.27.270.62.470 1.010.550.130.020.260.030.4.030h14c1.100 0 2-.9 2-2V5c0-1.100-.9-2-2-2zm-7-.25c.41 0 .75.340.75.750s-.34.750-.75.750-.75-.34-.75-.75.340-.75.750-.75zM19 19H5V5h14v14z" fill="#1a458b"/></svg>
<svg style="position:absolute;left:504.9px;top:440.5px;" width="30" height="30" viewBox="0 0 24 24"><path d="M19 2H5c-1.110 0-2 .9-2 2v14c0 1.100.89 2 2 2h4.500l2.500 2.800 2.500-2.800H19c1.100 0 2-.9 2-2V4c0-1.100-.9-2-2-2zm0 16H5V4h14v14zm-8-3h2v2h-2zm1-8c1.100 0 2 .9 2 2 0 2-3 1.750-3 5h2c0-2.250 3-2.500 3-5 0-2.210-1.790-4-4-4S8 6.790 8 9h2c0-1.100.9-2 2-2z" fill="#1a458b"/></svg>
<svg style="position:absolute;left:504.9px;top:500.5px;" width="30" height="30" viewBox="0 0 24 24"><path d="M18 2H6c-1.100 0-2 .9-2 2v16c0 1.100.9 2 2 2h12c1.100 0 2-.9 2-2V4c0-1.100-.9-2-2-2zm0 18H6V4h12v16z" fill="#1a458b"/><path d="M8 4h5v8.500l-2.500-1.900L8 12.500z" fill="#1a458b"/></svg>
<svg style="position:absolute;left:504.9px;top:560.5px;" width="30" height="30" viewBox="0 0 24 24"><path d="M4.800 11.200 V6 H19 M15.600 2.300 L19.300 6 L15.600 9.700 M19.200 12.800 V18 H5 M8.400 14.300 L4.700 18 L8.400 21.700" fill="none" stroke="#1a458b" stroke-width="2"/></svg>
<svg style="position:absolute;left:504.9px;top:641.5px;" width="30" height="30" viewBox="0 0 24 24"><path d="M3 5v14h18V5H3zm4 2v2H5V7h2zm-2 6v-2h2v2H5zm0 2h2v2H5v-2zm14 2H9v-2h10v2zm0-4H9v-2h10v2zm0-4H9V7h10v2z" fill="#1a458b"/></svg>
<svg style="position:absolute;left:28px;top:964px;" width="30" height="30" viewBox="0 0 24 24"><path d="M11 18h2v-2h-2v2zm1-16C6.480 2 2 6.480 2 12s4.480 10 10 10 10-4.480 10-10S17.520 2 12 2zm0 18c-4.410 0-8-3.590-8-8s3.590-8 8-8 8 3.590 8 8-3.590 8-8 8zm0-14c-2.210 0-4 1.790-4 4h2c0-1.100.9-2 2-2s2 .9 2 2c0 2-3 1.750-3 5h2c0-2.250 3-2.500 3-5 0-2.210-1.790-4-4-4z" fill="#5f6368"/></svg>
<!-- windows taskbar -->
<div style="position:absolute;left:0px;top:1020px;width:1920px;height:60px;background:#cee5ed;"></div>
<div style="position:absolute;left:0px;top:1020px;width:1920px;height:1px;background:#bdd0d9;"></div>
<svg style="position:absolute;left:26px;top:1039px;" width="30" height="25" viewBox="0 0 30 25"><path d="M7.500 17 A5.500 5.500 0 0 1 7.800 6.200 A8 8 0 0 1 22.600 7.200 A5 5 0 0 1 23 17 Z" fill="#f4f8fb" stroke="#d5e1e9" stroke-width=".8"/><path d="M18 17 A4 4 0 0 1 19 9.500 A5 5 0 0 1 27.500 11 A3.300 3.300 0 0 1 26.500 17 Z" fill="#dfe8ee"/><path d="M14.500 15.500 Q17 19.500 17 21 A2.500 2.500 0 0 1 12 21 Q12 19.500 14.500 15.500 Z" fill="#4c9be0"/></svg>
<span style="position:absolute;left:65.00px;top:1033.50px;font-size:14.8px;line-height:1;white-space:nowrap;color:#1b1b1b;transform:scaleX(0.9467);transform-origin:0 0;">30°C</span>
<span style="position:absolute;left:65.00px;top:1053.80px;font-size:14.8px;line-height:1;white-space:nowrap;color:#4b5860;transform:scaleX(1.0345);transform-origin:0 0;">Hujan ringan</span>
<div style="position:absolute;left:580px;top:1026px;width:48px;height:48px;background:#e6f1f7;border-radius:5px;border:1px solid #dbe9f1;"></div>
<div style="position:absolute;left:594px;top:1070px;width:20px;height:3.5px;background:#1271d6;border-radius:2px;"></div>
<div style="position:absolute;left:654.25px;top:1070px;width:7.5px;height:3.5px;background:#7d8b92;border-radius:2px;"></div>
<div style="position:absolute;left:709.25px;top:1070px;width:7.5px;height:3.5px;background:#7d8b92;border-radius:2px;"></div>
<div style="position:absolute;left:1039.25px;top:1070px;width:7.5px;height:3.5px;background:#7d8b92;border-radius:2px;"></div>
<div style="position:absolute;left:1094.25px;top:1070px;width:7.5px;height:3.5px;background:#7d8b92;border-radius:2px;"></div>
<div style="position:absolute;left:1259.25px;top:1070px;width:7.5px;height:3.5px;background:#7d8b92;border-radius:2px;"></div>
<div style="position:absolute;left:1314.25px;top:1070px;width:7.5px;height:3.5px;background:#7d8b92;border-radius:2px;"></div>
<div style="position:absolute;left:1369.25px;top:1070px;width:7.5px;height:3.5px;background:#7d8b92;border-radius:2px;"></div>
<div style="position:absolute;left:1424.25px;top:1070px;width:7.5px;height:3.5px;background:#7d8b92;border-radius:2px;"></div>
<div style="position:absolute;left:1479.25px;top:1070px;width:7.5px;height:3.5px;background:#7d8b92;border-radius:2px;"></div>
<div style="position:absolute;left:1534.25px;top:1070px;width:7.5px;height:3.5px;background:#7d8b92;border-radius:2px;"></div>
<svg style="position:absolute;left:368px;top:1035px;" width="30" height="30" viewBox="0 0 30 30"><defs><linearGradient id="wg" gradientUnits="userSpaceOnUse" x1="0" y1="0" x2="30" y2="30"><stop offset="0" stop-color="#55c8f3"/><stop offset=".45" stop-color="#1e9fe8"/><stop offset="1" stop-color="#0a6fd0"/></linearGradient></defs><path d="M0.500 1.500 Q0.500 0.500 1.500 0.500 H14.200 V14.200 H0.500 Z M15.800 0.500 H28.500 Q29.500 0.500 29.500 1.500 V14.200 H15.800 Z M0.500 15.800 H14.200 V29.500 H1.500 Q0.500 29.500 0.500 28.500 Z M15.800 15.800 H29.500 V28.500 Q29.500 29.500 28.500 29.500 H15.800 Z" fill="url(#wg)"/></svg>
<svg style="position:absolute;left:423px;top:1035px;" width="30" height="30" viewBox="0 0 30 30"><circle cx="17.500" cy="12" r="9.300" fill="none" stroke="#1a1a1a" stroke-width="3"/><path d="M11 19.500 L3.500 27.500" stroke="#1a1a1a" stroke-width="3.600" stroke-linecap="round"/></svg>
<svg style="position:absolute;left:478px;top:1035px;" width="30" height="30" viewBox="0 0 30 30"><rect x="1" y="9" width="21" height="19" rx="2" fill="#1e1e1e"/><rect x="8" y="1.500" width="21" height="19" rx="2" fill="#ececec" fill-opacity=".88" stroke="#f8f8f8" stroke-width=".8"/></svg>
<svg style="position:absolute;left:533px;top:1035px;" width="30" height="30" viewBox="0 0 30 30"><defs><linearGradient id="cg" x1="0" y1="0" x2="0" y2="1"><stop offset="0" stop-color="#8a78d8"/><stop offset="1" stop-color="#5a4fc0"/></linearGradient></defs><path d="M15 1.500 A13.500 13.500 0 1 1 7 26 L1.500 28.500 L3.500 22 A13.500 13.500 0 0 1 15 1.500 Z" fill="url(#cg)"/><rect x="7.500" y="9.500" width="11.500" height="10.500" rx="2.200" fill="#fff"/><path d="M19.500 13.500 L23.500 10.800 V18.800 L19.500 16.200 Z" fill="#fff"/></svg>
<svg style="position:absolute;left:588px;top:1035px;" width="30" height="30" viewBox="0 0 30 30"><circle cx="15" cy="15" r="13.800" fill="#fff"/><path d="M15 15 L3.050 8.100 A13.800 13.800 0 0 1 26.950 8.100 Z" fill="#e33b2e"/><path d="M15 15 L26.950 8.100 A13.800 13.800 0 0 1 15 28.800 Z" fill="#f7c433"/><path d="M15 15 L15 28.800 A13.800 13.800 0 0 1 3.050 8.100 Z" fill="#2da04b"/><path d="M15 8.100 H26.950 A13.800 13.800 0 0 1 28.800 15 Z" fill="#f7c433"/><path d="M15 8.100 H26.950 A13.800 13.800 0 0 0 3.050 8.100 L9 18.400 Z" fill="#e33b2e"/><path d="M21 18.450 L15 28.800 A13.800 13.800 0 0 0 26.950 8.100 H15 Z" fill="#f7c433"/><path d="M9.020 18.450 L3.050 8.100 A13.800 13.800 0 0 0 15 28.800 L21 18.450 Z" fill="#2da04b"/><circle cx="15" cy="15" r="6.900" fill="#fff"/><circle cx="15" cy="15" r="5.400" fill="#4a86ee"/></svg>
<svg style="position:absolute;left:643px;top:1035px;" width="30" height="30" viewBox="0 0 30 30"><path d="M15 1 A13.300 13.300 0 1 1 8.300 25.800 L1.200 27.800 L3.200 20.800 A13.300 13.300 0 0 1 15 1 Z" fill="#fff"/><path d="M15 3.200 A11.100 11.100 0 1 1 9 23.500 L4.400 24.700 L5.700 20.300 A11.100 11.100 0 0 1 15 3.200 Z" fill="#35c152"/><path d="M10.700 8.300 C11.300 8 11.900 8.200 12.100 8.800 L13 11 C13.200 11.500 13 12 12.600 12.400 L12 13 C12.800 14.700 14.200 16.100 16 17 L16.700 16.300 C17.100 15.900 17.600 15.800 18.100 16 L20.300 17 C20.800 17.200 21 17.800 20.700 18.400 C20 19.900 18.500 20.600 16.900 20.100 C13.200 18.900 10.200 15.900 9 12.200 C8.500 10.700 9.200 9 10.700 8.300 Z" fill="#fff"/></svg>
<svg style="position:absolute;left:698px;top:1035px;" width="30" height="30" viewBox="0 0 30 30"><defs><radialGradient id="fg" cx=".7" cy=".2" r=".9"><stop offset="0" stop-color="#ffdc3e"/><stop offset=".45" stop-color="#ff8a1c"/><stop offset="1" stop-color="#f0305c"/></radialGradient></defs><path d="M16 0.500 C18 3 19 3.500 21.500 3.600 C26 6 29.300 10.500 29 16.500 C28.600 23.500 22.500 29.300 15 29.300 C7 29.300 1 23 1.200 15.500 C1.300 11.500 2.800 8.500 4.500 6.800 C4.800 8 5.400 8.800 6 9.200 C6.800 6.500 9 5 11.500 4.800 C13.500 4.200 15.200 2.800 16 0.500 Z" fill="url(#fg)"/><circle cx="14.500" cy="16" r="6.700" fill="#7a3fd6"/><path d="M8 14 C10 10 16 9.300 19.500 12 C17 11.500 15.500 12.300 14.500 13.800 C12.500 14.500 10 14.800 8 14 Z" fill="#ff9a2a"/><circle cx="13.500" cy="17.500" r="3.800" fill="#5b3fd0"/></svg>
<svg style="position:absolute;left:753px;top:1035px;" width="30" height="30" viewBox="0 0 30 30"><path d="M0.500 11 L15 1.500 L29.500 11 V28 H0.500 Z" fill="#0f59a8"/><path d="M4.500 10.500 H25.500 V22 H4.500 Z" fill="#f1f3f5"/><path d="M0.500 11 L15 20.500 L29.500 11 V28.500 H0.500 Z" fill="#32b2f0"/><path d="M0.500 28.500 L15 20.500 L29.500 28.500 Z" fill="#1692dd"/><path d="M15 20.500 L29.500 11 V28.500 Z" fill="#2aa2e8"/></svg>
<svg style="position:absolute;left:808px;top:1035px;" width="30" height="30" viewBox="0 0 30 30"><defs><linearGradient id="eg" x1="0" y1="0" x2="1" y2="1"><stop offset="0" stop-color="#31c0e0"/><stop offset=".5" stop-color="#35c77a"/><stop offset="1" stop-color="#6bd44b"/></linearGradient></defs><circle cx="15" cy="15" r="14.300" fill="#1773c7"/><path d="M1 13 C2 5.500 8 0.700 15 0.700 C23.500 0.700 29.300 7 29.300 13.500 C29.300 18 26 21 22.300 21 C19.500 21 18 19.700 18.600 18.300 C19.300 17 19.300 15.200 18 13.500 C16 11 11 10 6.500 12.500 C3.500 14 1.500 17 1 13 Z" fill="url(#eg)"/><path d="M9 12 C6 16 7 23 12 27 C16 29.500 21 29 25 26 C20 27 15 25 13 21 C11.500 18 12 14 15 12 Z" fill="#0f4fa0"/><circle cx="8" cy="23.500" r="6.300" fill="#c9c7c4"/><circle cx="8" cy="21.500" r="2.300" fill="#7e7b78"/><path d="M3.800 27.300 Q8 22.500 12.200 27.300 Q8 31 3.800 27.300 Z" fill="#7e7b78"/></svg>
<svg style="position:absolute;left:863px;top:1035px;" width="30" height="30" viewBox="0 0 30 30"><rect x="0.800" y="3.500" width="28.400" height="21" fill="#9fd6f4" stroke="#5fb3e6" stroke-width="1"/><circle cx="9.500" cy="12.500" r="5.300" fill="#1f8fdc"/><path d="M9.500 12.500 V6.500 A6 6 0 0 1 15.500 12.500 Z" fill="#f09a2a"/><path d="M16 13 L22 8.500 M16 13 L22 13 M16 13 L22 17.500" stroke="#2a7fc2" stroke-width="1"/><circle cx="22.500" cy="8.500" r="1.900" fill="#eaf6fd"/><circle cx="23" cy="13" r="1.900" fill="#eaf6fd"/><circle cx="22.500" cy="17.500" r="1.900" fill="#eaf6fd"/><rect x="4" y="20.500" width="8.500" height="1.500" fill="#f09a2a"/><rect x="14" y="20.500" width="11" height="1.500" fill="#2a8fd8"/></svg>
<svg style="position:absolute;left:918px;top:1035px;" width="30" height="30" viewBox="0 0 30 30"><path d="M9.500 6.500 V4 Q9.500 2 11.500 2 H18.500 Q20.500 2 20.500 4 V6.500" fill="none" stroke="#3aa0ea" stroke-width="1.800"/><path d="M1 6 H29 V23.500 Q29 28.500 24 28.500 H6 Q1 28.500 1 23.500 Z" fill="#16467f"/><rect x="9.300" y="11.300" width="5.300" height="5.300" fill="#f25022"/><rect x="15.500" y="11.300" width="5.300" height="5.300" fill="#7fba00"/><rect x="9.300" y="17.500" width="5.300" height="5.300" fill="#00a4ef"/><rect x="15.500" y="17.500" width="5.300" height="5.300" fill="#ffb900"/></svg>
<svg style="position:absolute;left:973px;top:1035px;" width="30" height="30" viewBox="0 0 30 30"><defs><linearGradient id="dg" x1="0" y1="0" x2="1" y2="0"><stop offset="0" stop-color="#f540a8"/><stop offset=".5" stop-color="#f40f0f"/><stop offset="1" stop-color="#ff9a16"/></linearGradient></defs><path d="M15 0.500 L29.500 14.500 L15 29.500 L0.500 14.500 Z" fill="url(#dg)"/></svg>
<svg style="position:absolute;left:1028px;top:1035px;" width="30" height="30" viewBox="0 0 30 30"><circle cx="15" cy="15" r="13.500" fill="#2795d6"/><path d="M5.500 14.600 L22.500 8 C23.300 7.700 24 8.200 23.700 9.400 L20.800 22.500 C20.600 23.400 20 23.600 19.300 23.200 L14.800 20 L12.700 22 C12.400 22.300 12.200 22.400 11.900 22.100 L12.300 17.600 L20 10.800 L10.300 16.700 L6 15.400 C5.100 15.100 5.100 14.800 5.500 14.600 Z" fill="#fff"/></svg>
<svg style="position:absolute;left:1083px;top:1035px;" width="30" height="30" viewBox="0 0 30 30"><path d="M1 4.500 Q1 3 2.500 3 H10 L13 6 H27.500 Q29 6 29 7.500 V10 H1 Z" fill="#e5a620"/><rect x="1" y="6.500" width="28" height="22" rx="1.500" fill="#ffd65c"/><path d="M1 20 H29 V27 Q29 28.500 27.500 28.500 H2.500 Q1 28.500 1 27 Z" fill="#f7c23e"/><path d="M6.500 28.500 V22 Q6.500 20.500 8 20.500 H22 Q23.500 20.500 23.500 22 V28.500 Z" fill="#1a73d2"/><rect x="9.500" y="23.300" width="11" height="1.800" rx=".9" fill="#0c4f9e"/></svg>
<svg style="position:absolute;left:1138px;top:1035px;" width="30" height="30" viewBox="0 0 30 30"><circle cx="15" cy="15" r="14.200" fill="#fff"/><circle cx="15" cy="15" r="12.800" fill="#1f8fd3"/><path d="M10.300 11.500 C10.300 8.500 12.300 6.800 15 6.800 C17.800 6.800 19.800 8.500 19.800 11 C19.800 14.500 15.300 14.500 15.300 18.300" fill="none" stroke="#fff" stroke-width="2.800"/><circle cx="15.200" cy="22.800" r="1.900" fill="#fff"/></svg>
<svg style="position:absolute;left:1193px;top:1035px;" width="30" height="30" viewBox="0 0 30 30"><rect x="0.500" y="0.500" width="29" height="29" rx="2" fill="#2b8ae6"/><path d="M4 7 L9 22.500 L13.500 7" fill="none" stroke="#fff" stroke-width="1.500"/><path d="M16.500 14 V8.500 M16.500 11.500 Q16.500 8 19.700 8 Q23 8 23 11.500 V14.500" fill="none" stroke="#fff" stroke-width="1.500"/><path d="M23.500 17.500 H19.500 Q16.500 17.500 16.500 20 Q16.500 22.500 19.500 22.500 H23.500" fill="none" stroke="#fff" stroke-width="1.500"/></svg>
<svg style="position:absolute;left:1248px;top:1035px;" width="30" height="30" viewBox="0 0 30 30"><circle cx="16.500" cy="15" r="13" fill="#ed6c47"/><path d="M16.500 2 A13 13 0 0 1 29.500 15 H16.500 Z" fill="#ff8f6b"/><path d="M3.500 15 H29.500 A13 13 0 0 1 3.500 15 Z" fill="#d35230"/><rect x="0.500" y="7.500" width="15" height="15" rx="1.500" fill="#c43e1c"/><text x="8" y="19.500" font-family="Liberation Sans, sans-serif" font-weight="700" font-size="11.500" text-anchor="middle" fill="#fff">P</text></svg>
<svg style="position:absolute;left:1303px;top:1035px;" width="30" height="30" viewBox="0 0 30 30"><rect x="4" y="3" width="22" height="24" rx="1.500" fill="#5cc4e4"/><rect x="4" y="3" width="22" height="4" fill="#3eaad0"/><circle cx="7.5" cy="2.500" r="1.600" fill="#0e6a8c"/><circle cx="12.5" cy="2.500" r="1.600" fill="#0e6a8c"/><circle cx="17.5" cy="2.500" r="1.600" fill="#0e6a8c"/><circle cx="22.5" cy="2.500" r="1.600" fill="#0e6a8c"/><rect x="8" y="10" width="14" height="1.700" fill="#0e6a8c"/><rect x="8" y="14.500" width="14" height="1.700" fill="#0e6a8c"/><rect x="8" y="19" width="14" height="1.700" fill="#0e6a8c"/><path d="M4 26 H26 V27.500 Q26 29 24.500 29 H5.500 Q4 29 4 27.500 Z" fill="#8b3f12"/><rect x="4" y="25.500" width="22" height="1.500" fill="#f3f3f3"/></svg>
<svg style="position:absolute;left:1358px;top:1035px;" width="30" height="30" viewBox="0 0 30 30"><rect x="8" y="1.500" width="21.500" height="27" rx="1.500" fill="#41a5ee"/><rect x="8" y="8.300" width="21.500" height="6.800" fill="#2b7cd3"/><rect x="8" y="15" width="21.500" height="6.800" fill="#185abd"/><path d="M8 21.800 H29.500 V27 Q29.500 28.500 28 28.500 H9.500 Q8 28.500 8 27 Z" fill="#103f91"/><rect x="0.500" y="7.500" width="15" height="15" rx="1.500" fill="#1a5dbe"/><text x="8" y="19.500" font-family="Liberation Sans, sans-serif" font-weight="700" font-size="11.500" text-anchor="middle" fill="#fff">W</text></svg>
<svg style="position:absolute;left:1413px;top:1035px;" width="30" height="30" viewBox="0 0 30 30"><rect x="8" y="1.500" width="21.500" height="27" rx="1.500" fill="#21a366"/><rect x="18.700" y="1.500" width="10.800" height="6.800" fill="#33c481"/><rect x="8" y="8.300" width="10.700" height="6.800" fill="#107c41"/><rect x="18.700" y="8.300" width="10.800" height="6.800" fill="#21a366"/><rect x="8" y="15" width="21.500" height="6.800" fill="#185c37"/><rect x="18.700" y="15" width="10.800" height="6.800" fill="#107c41"/><path d="M8 21.800 H29.500 V27 Q29.500 28.500 28 28.500 H9.500 Q8 28.500 8 27 Z" fill="#134f2f"/><rect x="0.500" y="7.500" width="15" height="15" rx="1.500" fill="#107c41"/><text x="8" y="19.500" font-family="Liberation Sans, sans-serif" font-weight="700" font-size="11.500" text-anchor="middle" fill="#fff">X</text></svg>
<svg style="position:absolute;left:1468px;top:1035px;" width="30" height="30" viewBox="0 0 30 30"><circle cx="15" cy="15" r="13.800" fill="#fff"/><path d="M15 15 L3.050 8.100 A13.800 13.800 0 0 1 26.950 8.100 Z" fill="#e33b2e"/><path d="M15 15 L26.950 8.100 A13.800 13.800 0 0 1 15 28.800 Z" fill="#f7c433"/><path d="M15 15 L15 28.800 A13.800 13.800 0 0 1 3.050 8.100 Z" fill="#2da04b"/><path d="M15 8.100 H26.950 A13.800 13.800 0 0 1 28.800 15 Z" fill="#f7c433"/><path d="M15 8.100 H26.950 A13.800 13.800 0 0 0 3.050 8.100 L9 18.400 Z" fill="#e33b2e"/><path d="M21 18.450 L15 28.800 A13.800 13.800 0 0 0 26.950 8.100 H15 Z" fill="#f7c433"/><path d="M9.020 18.450 L3.050 8.100 A13.800 13.800 0 0 0 15 28.800 L21 18.450 Z" fill="#2da04b"/><circle cx="15" cy="15" r="6.900" fill="#fff"/><circle cx="15" cy="15" r="5.400" fill="#4a86ee"/><circle cx="22.500" cy="22.500" r="7" fill="#e2457d"/><circle cx="22.500" cy="20.500" r="3.200" fill="#e9b79a"/><path d="M18.500 19.500 Q18.500 15.500 22.500 15.500 Q26.500 15.500 26.500 19.500 Q24.500 17.500 22.500 18 Q20.500 17.500 18.500 19.500 Z" fill="#2a1a16"/><path d="M17.500 27.500 Q22.500 21.500 27.500 27.500 Q22.500 31 17.500 27.500 Z" fill="#e84a8a"/></svg>
<svg style="position:absolute;left:1523px;top:1035px;" width="30" height="30" viewBox="0 0 30 30"><rect x="0.500" y="4.500" width="29" height="21" fill="#f7f7f7" stroke="#9a9a9a" stroke-width="1"/><rect x="0.500" y="4.500" width="29" height="2" fill="#8a8a8a"/><rect x="9" y="8.500" width="12" height="15" rx="1" fill="#1878d0"/><path d="M3 10 H7 M3 13 H7 M3 16 H7 M3 19 H7 M23 10 H27 M23 13 H27 M23 16 H27" stroke="#aaa" stroke-width="1"/></svg>
<svg style="position:absolute;left:1657px;top:1046px;" width="16" height="9" viewBox="0 0 16 9"><path d="M0.800 8.300 L8 1.100 L15.200 8.300" fill="none" stroke="#1a1a1a" stroke-width="1.400"/></svg>
<svg style="position:absolute;left:1689px;top:1040px;" width="22" height="17" viewBox="0 0 22 17"><path d="M1 6.300 A14.500 14.500 0 0 1 21 6.300 M4 9.600 A10 10 0 0 1 18 9.600 M7.200 12.800 A5.500 5.500 0 0 1 14.800 12.800" fill="none" stroke="#1a1a1a" stroke-width="1.400"/><circle cx="11" cy="15.300" r="1.500" fill="#1a1a1a"/></svg>
<svg style="position:absolute;left:1719px;top:1040.5px;" width="22" height="18" viewBox="0 0 22 18"><path d="M1.200 6.300 H4.500 L9 2 V16 L4.500 11.700 H1.200 Z" fill="none" stroke="#1a1a1a" stroke-width="1.300" stroke-linejoin="round"/><path d="M11.800 6.300 Q13.500 9 11.800 11.700 M14.500 4.200 Q17.600 9 14.500 13.800 M17.300 2 Q21.600 9 17.300 16" fill="none" stroke="#1a1a1a" stroke-width="1.300"/></svg>
<svg style="position:absolute;left:1750px;top:1043.5px;" width="21" height="13" viewBox="0 0 21 13"><rect x="0.700" y="0.700" width="17" height="11.600" rx="2.600" fill="none" stroke="#1a1a1a" stroke-width="1.400"/><rect x="2.800" y="2.800" width="6" height="7.400" rx="1" fill="#1a1a1a"/><path d="M18.500 4.300 Q20.500 4.500 20.500 6.500 Q20.500 8.500 18.500 8.700 Z" fill="#1a1a1a"/></svg>
<span style="position:absolute;left:1831.70px;top:1032.50px;font-size:14.8px;line-height:1;white-space:nowrap;color:#1b1b1b;transform:scaleX(0.9397);transform-origin:0 0;">15.58</span>
<span style="position:absolute;left:1789.20px;top:1053.00px;font-size:14.8px;line-height:1;white-space:nowrap;color:#1b1b1b;transform:scaleX(1.0437);transform-origin:0 0;">25/03/2022</span>
<div style="position:absolute;left:1876px;top:1040px;width:20px;height:20px;background:#0f73d6;border-radius:10px;"></div>
<span style="position:absolute;left:1881.86px;top:1043.20px;font-size:14.5px;line-height:1;white-space:nowrap;color:#fff;">2</span>
</body></html>
